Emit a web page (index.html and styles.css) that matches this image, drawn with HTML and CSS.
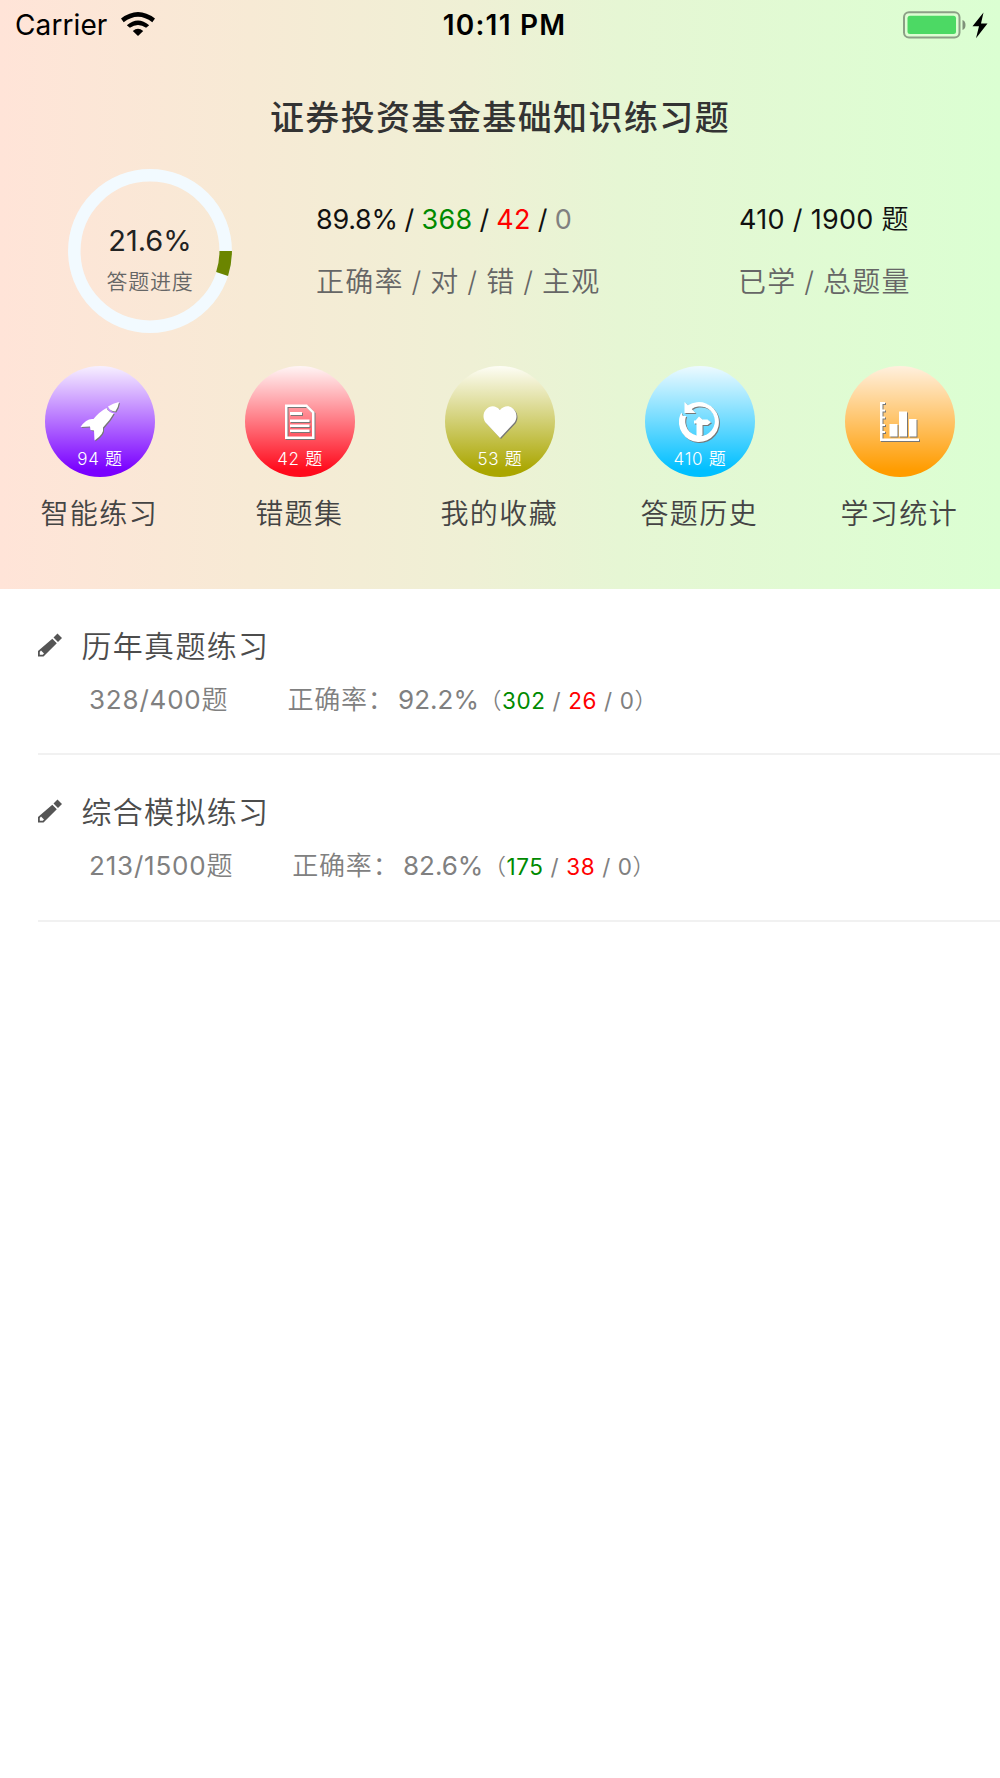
FILE: index.html
```html
<!DOCTYPE html>
<html lang="zh-CN">
<head>
<meta charset="utf-8">
<title>证券投资基金基础知识练习题</title>
<link rel="stylesheet" href="styles.css">
</head>
<body>
<header class="hero">
  <div class="statusbar">
    <div class="carrier"><span>Carrier</span>
      <svg class="wifi" width="34" height="24" viewBox="0 0 34 24"><path d="M0 6.5Q17-6.500 34 6.500L31.300 10.200Q17-.8 2.700 10.200zM5.800 13.200Q17 3.800 28.200 13.200L25.100 15.800Q17 10 8.900 15.800zM11.800 19Q17 14.500 22.200 19L17 24z"/></svg>
    </div>
    <div class="clock">10:11 PM</div>
    <svg class="battery" width="86" height="28" viewBox="0 0 86 28"><rect x="1" y="1.200" width="55.500" height="25.200" rx="5" fill="none" stroke="#8c9f86" stroke-width="2"/><rect x="4.500" y="4.700" width="48.500" height="18.300" rx="2.500" fill="#4cd964"/><path d="M59.500 9Q62.500 10 62.500 14T59.500 19z" fill="#7f917a"/><path d="M80.500 1.500L69.500 15.300H76L73 27.200L84.500 12.500H78z"/></svg>
  </div>
  <h1 class="title">证券投资基金基础知识练习题</h1>
  <section class="summary">
    <div class="ring">
      <svg width="164" height="164" viewBox="0 0 164 164"><circle cx="82" cy="82" r="75.700" fill="none" stroke="#f2faff" stroke-width="12.500"/><path d="M157.700 82A75.700 75.700 0 0 1 154.100 105" fill="none" stroke="#6b8500" stroke-width="12.500"/></svg>
      <div class="ring-text"><strong>21.6%</strong><span>答题进度</span></div>
    </div>
    <div class="stat rate">
      <p class="value"><span class="percent">89.8%</span> / <span class="ok">368</span> / <span class="bad">42</span> / <span class="mute">0</span></p>
      <p class="caption">正确率 / 对 / 错 / 主观</p>
    </div>
    <div class="stat total">
      <p class="value">410 / 1900 题</p>
      <p class="caption">已学 / 总题量</p>
    </div>
  </section>
  <nav class="menu">
    <a class="entry"><span class="disc violet"><svg width="42" height="42" viewBox="0 0 42 42"><path d="M29 5.500Q34 2.200 40 1Q39.300 6.500 36.300 10.500Q31 10.300 29 5.500zM27.500 7Q29.500 11.500 34.800 12.300Q31 19.500 24 26.500Q25.500 33 15.500 39.500L15 29.500L11.500 29L11 25.500L1.500 26Q7.500 17 14.500 18Q20 11 27.500 7z"/></svg><small>94 题</small></span><b>智能练习</b></a>
    <a class="entry"><span class="disc red"><svg width="42" height="42" viewBox="0 0 42 42"><path fill-rule="evenodd" d="M6 3.500H28L35.500 11V38H6zM8.500 6V35.500H33V12L27 6zM11 11H23V14H11zM11 18.500H30.500V21H11zM11 23.500H30.500V26H11zM11 28.500H30.500V31H11z"/></svg><small>42 题</small></span><b>错题集</b></a>
    <a class="entry"><span class="disc olive"><svg width="42" height="42" viewBox="0 0 42 42"><path d="M21 37L6.500 21.500C-.5 11 12.500-1 21 9C29.500-1 42.500 11 35.500 21.500z"/></svg><small>53 题</small></span><b>我的收藏</b></a>
    <a class="entry"><span class="disc blue"><svg width="42" height="42" viewBox="0 0 42 42"><path d="M5.500 1L9 4.300A20 20 0 1 1 1.200 14L2.500 11.500L3.800 15H7.200A14.800 14.800 0 1 0 12.700 8L16.500 12H5.500zM20 15.500L23.500 18.500H28.500L32 21.300L28.500 24H23.500V34L20.500 36L17.500 34V22.500H15V19.500H16.500z"/></svg><small>410 题</small></span><b>答题历史</b></a>
    <a class="entry"><span class="disc orange"><svg width="42" height="42" viewBox="0 0 42 42"><path d="M1 1H6V3H3.500V8.500H6V10.500H3.500V15.500H6V17.500H3.500V23H6V25H3.500V30H6V32H3.500V37.500H40V40H1zM10.500 23H18.500V35.500H10.500zM20 10.500H28V35.500H20zM30 18H37.500V35.500H30z"/></svg><small>&nbsp;</small></span><b>学习统计</b></a>
  </nav>
</header>
<main class="list">
  <article class="item">
    <h2><svg class="pencil" width="24" height="24" viewBox="0 0 24 24"><path d="M15.500 4.500L19.500 0.500L24 5L20 9zM14.300 5.700L18.800 10.200L5.500 23.500H0V18zM3 17.500L1.800 19V21.700H4.700L6 20.500z" fill-rule="evenodd"/></svg>历年真题练习</h2>
    <p><span>328/400题</span><span class="accuracy">正确率：<em>92.2%</em><i>（<span class="ok">302</span> / <span class="bad">26</span> / 0）</i></span></p>
  </article>
  <article class="item">
    <h2><svg class="pencil" width="24" height="24" viewBox="0 0 24 24"><path d="M15.500 4.500L19.500 0.500L24 5L20 9zM14.300 5.700L18.800 10.200L5.500 23.500H0V18zM3 17.500L1.800 19V21.700H4.700L6 20.500z" fill-rule="evenodd"/></svg>综合模拟练习</h2>
    <p><span>213/1500题</span><span class="accuracy">正确率：<em>82.6%</em><i>（<span class="ok">175</span> / <span class="bad">38</span> / 0）</i></span></p>
  </article>
</main>
</body>
</html>
```
FILE: styles.css
```css
* { box-sizing: border-box; margin: 0; padding: 0; }
body { background: #fff; color: #111; font-family: Inter, "Noto Sans CJK SC DemiLight", "Noto Sans CJK SC", sans-serif; }
.hero { height: 588.5px; background: linear-gradient(90deg, #ffe4d8 0%, #f7ead5 25%, #eff0d5 47%, #e6f6d4 62%, #dbffd2 100%); }
.statusbar { display: grid; grid-template-columns: 1fr auto 1fr; align-items: center; height: 50px; padding: 0 10px 0 15px; color: #000; font-size: 28px; line-height: 34px; }
.carrier { display: flex; align-items: center; gap: 14px; letter-spacing: 0.1px; }
.wifi { margin-top: -2px; }
.clock { font-weight: 600; letter-spacing: 1.2px; margin-right: -4px; }
.battery { justify-self: end; margin-right: 1px; margin-top: -1px; }
.title { margin-top: 43px; height: 50px; line-height: 50px; text-align: center; font-family: Inter, "Noto Sans CJK SC", sans-serif; font-size: 34px; font-weight: 500; letter-spacing: 1.4px; color: #333; }
.summary { display: flex; height: 166px; margin-top: 26px; padding-left: 68px; }
.ring { display: grid; width: 164px; height: 164px; }
.ring > * { grid-area: 1 / 1; }
.ring-text { display: flex; flex-direction: column; align-items: center; padding-top: 53px; }
.ring-text strong { font-size: 29px; line-height: 38px; font-weight: 400; color: #222; }
.ring-text span { margin-top: 6px; font-size: 21px; line-height: 32px; letter-spacing: 0.8px; color: #666; font-weight: 350; }
.stat { padding-top: 31px; white-space: nowrap; }
.rate { width: 422px; padding-left: 84px; }
.total { padding-left: 85px; }
.value { font-size: 27px; line-height: 40px; letter-spacing: 0.3px; }
.rate .value { word-spacing: -1px; }
.percent { letter-spacing: -0.3px; }
.caption { margin-top: 22px; font-size: 28px; line-height: 40px; letter-spacing: 1.2px; word-spacing: -1.2px; color: #666; font-weight: 350; }
.total .caption { margin-left: -1px; }
.ok { color: #008a00; }
.bad { color: #f00; }
.mute { color: #808080; }
.menu { display: grid; grid-template-columns: repeat(5, 200px); margin-top: 31px; }
.entry { display: flex; flex-direction: column; align-items: center; }
.disc { display: flex; flex-direction: column; align-items: center; width: 110px; height: 111px; padding-top: 35px; border-radius: 50%; color: #fff; }
.disc svg { fill: #fff; filter: drop-shadow(1px 1px 0 #777); }
.disc small { margin-top: 4px; font-size: 17px; line-height: 24px; letter-spacing: 0.7px; font-weight: 350; }
.entry b { margin-top: 17px; margin-left: -1.5px; font-size: 28px; line-height: 40px; letter-spacing: 1.4px; font-weight: 350; color: #444; }
.violet { background: linear-gradient(#f7f0ff, #7a00ff 94%); }
.red { background: linear-gradient(#fff5f5, #ff0a1c 94%); }
.olive { background: linear-gradient(#fdfdf5, #aaa600 94%); }
.blue { background: linear-gradient(#edfaff, #00bfff 94%); }
.orange { background: linear-gradient(#fff0de, #ff9c00 94%); }
.list { padding-left: 38px; }
.item { height: 166.500px; padding-top: 33px; border-bottom: 2px solid #f1f1f1; }
.item h2 { display: flex; align-items: center; height: 44px; font-size: 30px; font-weight: 350; letter-spacing: 1.3px; color: #4c4c4c; }
.pencil { margin-right: 19.500px; margin-top: 2px; fill: #555; }
.item p { display: flex; align-items: baseline; gap: 59px; margin: 14px 0 0 51px; font-size: 26px; line-height: 40px; letter-spacing: 0.8px; color: #808080; font-weight: 400; }
.item em, .item i { font-style: normal; }
.item em { margin-left: 3.500px; letter-spacing: 0; }
.item i { font-size: 22.500px; letter-spacing: 0.6px; }
```
